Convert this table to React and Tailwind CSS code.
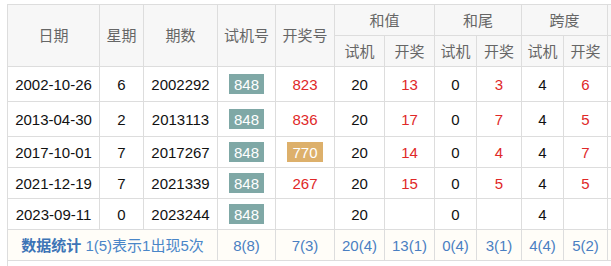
export default function App() {
  const rows = [
    { d: "2002-10-26", w: "6", q: "2002292", s: "848", k: "823", ko: false, hs: "20", hk: "13", ws: "0", wk: "3", ks: "4", kk: "6", h: "h-[35px]" },
    { d: "2013-04-30", w: "2", q: "2013113", s: "848", k: "836", ko: false, hs: "20", hk: "17", ws: "0", wk: "7", ks: "4", kk: "5", h: "h-[35px]" },
    { d: "2017-10-01", w: "7", q: "2017267", s: "848", k: "770", ko: true, hs: "20", hk: "14", ws: "0", wk: "4", ks: "4", kk: "7", h: "h-[31px]" },
    { d: "2021-12-19", w: "7", q: "2021339", s: "848", k: "267", ko: false, hs: "20", hk: "15", ws: "0", wk: "5", ks: "4", kk: "5", h: "h-[31px]" },
    { d: "2023-09-11", w: "0", q: "2023244", s: "848", k: "", ko: false, hs: "20", hk: "", ws: "0", wk: "", ks: "4", kk: "", h: "h-[31px]" },
  ];
  const cell = "border border-[#dddddd] text-center p-0";
  const hcell = "border border-[#dddddd] text-center p-0 bg-[#f7f7f7] text-[#666666] font-normal";
  const red = "text-[#e02828]";
  const stat = "border border-[#dddddd] text-center p-0 text-[#4a7fc2]";
  return (
    <div
      className="w-[611px] h-[266px] overflow-hidden bg-white pl-[7px] pt-[4px]"
      style={{ fontFamily: '"Liberation Sans", Arial, "Noto Sans CJK SC", sans-serif' }}
    >
      <table className="border-collapse table-fixed w-[660px] text-[15px] leading-none text-[#111111]">
        <colgroup>
          <col className="w-[92px]" />
          <col className="w-[44px]" />
          <col className="w-[74px]" />
          <col className="w-[58px]" />
          <col className="w-[59px]" />
          <col className="w-[50px]" />
          <col className="w-[50px]" />
          <col className="w-[42px]" />
          <col className="w-[45px]" />
          <col className="w-[42px]" />
          <col className="w-[44px]" />
          <col className="w-[30px]" />
          <col className="w-[30px]" />
        </colgroup>
        <thead>
          <tr className="h-[31px]">
            <th rowSpan={2} className={hcell}>日期</th>
            <th rowSpan={2} className={hcell}>星期</th>
            <th rowSpan={2} className={hcell}>期数</th>
            <th rowSpan={2} className={hcell}>试机号</th>
            <th rowSpan={2} className={hcell}>开奖号</th>
            <th colSpan={2} className={hcell}>和值</th>
            <th colSpan={2} className={hcell}>和尾</th>
            <th colSpan={2} className={hcell}>跨度</th>
            <th colSpan={2} className={hcell}>&nbsp;</th>
          </tr>
          <tr className="h-[31px]">
            <th className={hcell}>试机</th>
            <th className={hcell}>开奖</th>
            <th className={hcell}>试机</th>
            <th className={hcell}>开奖</th>
            <th className={hcell}>试机</th>
            <th className={hcell}>开奖</th>
            <th className={hcell}>&nbsp;</th>
            <th className={hcell}>&nbsp;</th>
          </tr>
        </thead>
        <tbody>
          {rows.map((r) => (
            <tr key={r.d} className={r.h}>
              <td className={cell}>{r.d}</td>
              <td className={cell}>{r.w}</td>
              <td className={cell}>{r.q}</td>
              <td className={cell}>
                <span className="inline-flex items-center justify-center h-[20px] px-[5px] bg-[#7fa8a6] text-white">{r.s}</span>
              </td>
              <td className={cell}>
                {r.ko ? (
                  <span className="inline-flex items-center justify-center h-[20px] px-[5px] bg-[#ddb06b] text-white">{r.k}</span>
                ) : (
                  <span className={red}>{r.k}</span>
                )}
              </td>
              <td className={cell}>{r.hs}</td>
              <td className={`${cell} ${red}`}>{r.hk}</td>
              <td className={cell}>{r.ws}</td>
              <td className={`${cell} ${red}`}>{r.wk}</td>
              <td className={cell}>{r.ks}</td>
              <td className={`${cell} ${red}`}>{r.kk}</td>
              <td className={cell}></td>
              <td className={cell}></td>
            </tr>
          ))}
          <tr className="h-[31px] bg-[#fffdf8]">
            <td colSpan={3} className={`${stat} text-[#4a86c8]`}>
              <span className="font-bold text-[#3d74b6]">数据统计</span> 1(5)表示1出现5次
            </td>
            <td className={stat}>8(8)</td>
            <td className={stat}>7(3)</td>
            <td className={stat}>20(4)</td>
            <td className={stat}>13(1)</td>
            <td className={stat}>0(4)</td>
            <td className={stat}>3(1)</td>
            <td className={stat}>4(4)</td>
            <td className={stat}>5(2)</td>
            <td className={stat}></td>
            <td className={stat}></td>
          </tr>
          <tr className="h-[31px]">
            <td colSpan={13} className="border-l border-t border-[#dddddd] p-0"></td>
          </tr>
        </tbody>
      </table>
    </div>
  );
}
